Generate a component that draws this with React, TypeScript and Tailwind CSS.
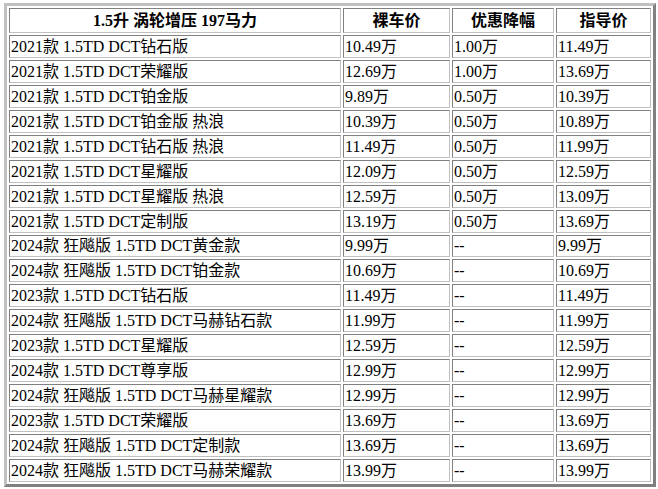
import React from 'react';

type Row = {
  name: string;
  price: string;
  discount: string;
  guide: string;
};

const rows: Row[] = [
  { name: '2021款 1.5TD DCT钻石版', price: '10.49万', discount: '1.00万', guide: '11.49万' },
  { name: '2021款 1.5TD DCT荣耀版', price: '12.69万', discount: '1.00万', guide: '13.69万' },
  { name: '2021款 1.5TD DCT铂金版', price: '9.89万', discount: '0.50万', guide: '10.39万' },
  { name: '2021款 1.5TD DCT铂金版 热浪', price: '10.39万', discount: '0.50万', guide: '10.89万' },
  { name: '2021款 1.5TD DCT钻石版 热浪', price: '11.49万', discount: '0.50万', guide: '11.99万' },
  { name: '2021款 1.5TD DCT星耀版', price: '12.09万', discount: '0.50万', guide: '12.59万' },
  { name: '2021款 1.5TD DCT星耀版 热浪', price: '12.59万', discount: '0.50万', guide: '13.09万' },
  { name: '2021款 1.5TD DCT定制版', price: '13.19万', discount: '0.50万', guide: '13.69万' },
  { name: '2024款 狂飚版 1.5TD DCT黄金款', price: '9.99万', discount: '--', guide: '9.99万' },
  { name: '2024款 狂飚版 1.5TD DCT铂金款', price: '10.69万', discount: '--', guide: '10.69万' },
  { name: '2023款 1.5TD DCT钻石版', price: '11.49万', discount: '--', guide: '11.49万' },
  { name: '2024款 狂飚版 1.5TD DCT马赫钻石款', price: '11.99万', discount: '--', guide: '11.99万' },
  { name: '2023款 1.5TD DCT星耀版', price: '12.59万', discount: '--', guide: '12.59万' },
  { name: '2024款 1.5TD DCT尊享版', price: '12.99万', discount: '--', guide: '12.99万' },
  { name: '2024款 狂飚版 1.5TD DCT马赫星耀款', price: '12.99万', discount: '--', guide: '12.99万' },
  { name: '2023款 1.5TD DCT荣耀版', price: '13.69万', discount: '--', guide: '13.69万' },
  { name: '2024款 狂飚版 1.5TD DCT定制款', price: '13.69万', discount: '--', guide: '13.69万' },
  { name: '2024款 狂飚版 1.5TD DCT马赫荣耀款', price: '13.99万', discount: '--', guide: '13.99万' },
];

const cell =
  'border border-t-[#808080] border-l-[#808080] border-b-[#c0c0c0] border-r-[#c0c0c0] p-px align-middle whitespace-nowrap overflow-hidden';

const headers = ['1.5升 涡轮增压 197马力', '裸车价', '优惠降幅', '指导价'];

export default function App() {
  return (
    <div className="bg-white w-[658px] h-[489px] pt-[3px] pl-[4px] text-black font-['Liberation_Serif','Noto_Sans_CJK_SC',serif] text-[16px]">
      <table className="table-fixed border-separate border-spacing-[2px] w-[652px] border-[3px] border-t-[#c0c0c0] border-l-[#c0c0c0] border-b-[#808080] border-r-[#808080]">
        <colgroup>
          <col className="w-[332px]" />
          <col className="w-[107px]" />
          <col className="w-[102px]" />
          <col className="w-[95px]" />
        </colgroup>
        <thead>
          <tr>
            {headers.map((h) => (
              <th key={h} className={`${cell} h-[25px] leading-[20px] font-bold text-center`}>
                {h}
              </th>
            ))}
          </tr>
        </thead>
        <tbody>
          {rows.map((r) => (
            <tr key={r.name}>
              <td className={`${cell} h-[22.95px] leading-[17px] text-left`}>{r.name}</td>
              <td className={`${cell} h-[22.95px] leading-[17px] text-left`}>{r.price}</td>
              <td className={`${cell} h-[22.95px] leading-[17px] text-left`}>{r.discount}</td>
              <td className={`${cell} h-[22.95px] leading-[17px] text-left`}>{r.guide}</td>
            </tr>
          ))}
        </tbody>
      </table>
    </div>
  );
}
